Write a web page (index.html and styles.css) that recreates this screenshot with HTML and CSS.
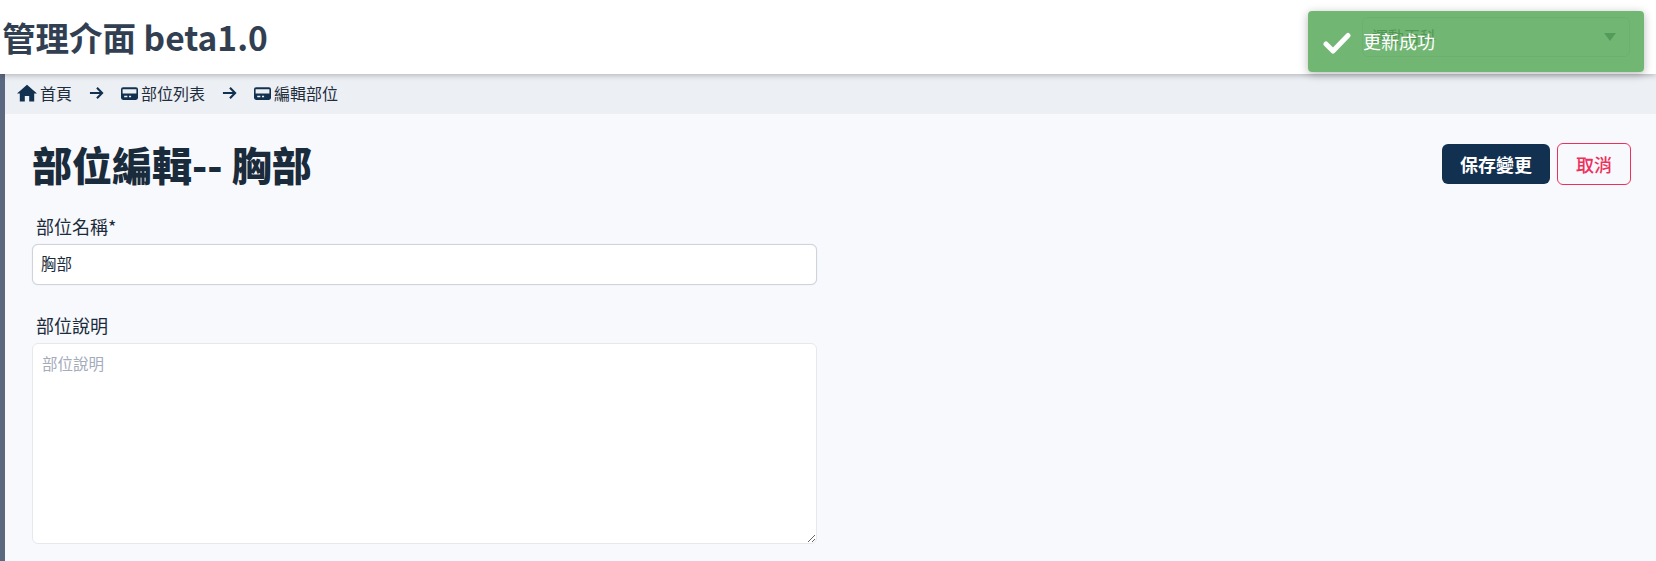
FILE: index.html
```html
<!DOCTYPE html>
<html lang="zh-Hant">
<head>
<meta charset="utf-8">
<title>部位編輯</title>
<link rel="stylesheet" href="styles.css">
</head>
<body>
<header class="topbar">
  <h1 class="brand">管理介面 beta1.0</h1>
  <div class="select">
    <span>運動百科</span>
    <svg class="caret" viewBox="0 0 14 10" width="14" height="10"><path d="M1 1h12L7 9z" fill="currentColor"/></svg>
  </div>
</header>
<div class="shell">
  <div class="rail"></div>
  <div class="content">
    <nav class="crumbs">
      <span class="crumb">
        <svg class="ico-home" viewBox="0 0 20 18" width="20" height="18"><path d="M10 .8 0 9.6h2.8V17.5h5V12h4.400v5.500h5V9.600H20z" fill="currentColor"/></svg>首頁
      </span>
      <svg class="arrow" viewBox="0 0 16 14" width="15" height="14"><path d="M1 7h13M8.500 1.500 14 7l-5.500 5.500" fill="none" stroke="currentColor" stroke-width="2.200"/></svg>
      <span class="crumb">
        <svg class="ico-card" viewBox="0 0 16 12" width="17" height="13"><path fill-rule="evenodd" d="M2 0h12a2 2 0 0 1 2 2v8a2 2 0 0 1-2 2H2a2 2 0 0 1-2-2V2a2 2 0 0 1 2-2Zm-.5 2v4h13V2ZM3 8v1.500h3V8Zm4.500 0v1.500h2V8Z" fill="currentColor"/></svg>部位列表
      </span>
      <svg class="arrow" viewBox="0 0 16 14" width="15" height="14"><path d="M1 7h13M8.500 1.500 14 7l-5.500 5.500" fill="none" stroke="currentColor" stroke-width="2.200"/></svg>
      <span class="crumb">
        <svg class="ico-card" viewBox="0 0 16 12" width="17" height="13"><path fill-rule="evenodd" d="M2 0h12a2 2 0 0 1 2 2v8a2 2 0 0 1-2 2H2a2 2 0 0 1-2-2V2a2 2 0 0 1 2-2Zm-.5 2v4h13V2ZM3 8v1.500h3V8Zm4.500 0v1.500h2V8Z" fill="currentColor"/></svg>編輯部位
      </span>
    </nav>
    <main class="page">
      <div class="page-head">
        <h2 class="page-title">部位編輯-- 胸部</h2>
        <div class="actions">
          <button class="btn btn-save" type="button">保存變更</button>
          <button class="btn btn-cancel" type="button">取消</button>
        </div>
      </div>
      <form class="form">
        <label class="field-label" for="name">部位名稱*</label>
        <input class="input" id="name" type="text" value="胸部">
        <label class="field-label label-gap" for="desc">部位說明</label>
        <textarea class="textarea" id="desc" placeholder="部位說明"></textarea>
      </form>
    </main>
  </div>
</div>
<div class="toast">
  <svg class="toast-check" viewBox="0 0 28 22" width="28" height="22"><path d="M3 12 10 19 25 3.500" fill="none" stroke="currentColor" stroke-width="5" stroke-linecap="round" stroke-linejoin="round"/></svg>
  <span class="toast-text">更新成功</span>
</div>
</body>
</html>
```
FILE: styles.css
```css
* { box-sizing: border-box; }
html, body { margin: 0; height: 100%; overflow: hidden; }
body {
  background: #f8f9fc;
  color: #1a2b3c;
  font-family: "Noto Sans CJK TC", "Noto Sans", sans-serif;
  font-size: 16px;
}
.topbar {
  position: relative;
  z-index: 2;
  height: 74px;
  padding: 0 26px 0 2px;
  display: flex;
  align-items: center;
  justify-content: space-between;
  background: #fff;
  box-shadow: 0 1px 6px rgba(0, 0, 0, .28);
}
.brand {
  margin: 0;
  font-size: 33.5px;
  line-height: 1;
  font-weight: 700;
  color: #323f52;
}
.select {
  width: 268px;
  height: 40px;
  padding: 0 12px 3px 9px;
  display: flex;
  align-items: center;
  justify-content: space-between;
  border: 1px solid #cfd5dd;
  border-radius: 6px;
  color: #1f2d3d;
  font-size: 16px;
}
.caret { color: #3a4657; margin-top: 3px; }
.shell { display: flex; height: 487px; }
.rail { width: 5px; background: #5a6880; flex: none; }
.content { flex: 1; min-width: 0; }
.crumbs {
  height: 40px;
  padding: 0 0 2px 12px;
  display: flex;
  align-items: center;
  background: #ecf0f5;
  color: #12304f;
  font-size: 16px;
}
.crumb { display: flex; align-items: center; gap: 3px; color: #1f2d3d; }
.ico-home, .ico-card { color: #12304f; flex: none; }
.arrow { margin: 0 17px; color: #12304f; flex: none; }
.page { padding: 0 25px 0 27px; }
.page-head {
  height: 101px;
  display: flex;
  align-items: center;
  justify-content: space-between;
  padding-bottom: 1px;
}
.page-title {
  margin: 0;
  font-size: 40px;
  line-height: 1.2;
  font-weight: 900;
  color: #1a2b3b;
}
.actions { display: flex; align-items: center; gap: 7px; }
.btn {
  font-family: inherit;
  font-size: 18px;
  font-weight: 700;
  border-radius: 6px;
  padding: 0;
}
.btn-save { width: 108px; height: 40px; background: #12304f; color: #fff; border: 0; }
.btn-cancel { width: 74px; height: 42px; background: transparent; color: #ef2f5b; border: 1px solid #ef2f5b; font-weight: 500; }
.form { width: 785px; display: flex; flex-direction: column; }
.field-label {
  padding-left: 4px;
  height: 29px;
  line-height: 22px;
  font-size: 18px;
  color: #1a2b3b;
}
.label-gap { margin-top: 27px; height: 31px; line-height: 26px; }
.input, .textarea {
  width: 100%;
  background: #fff;
  border-radius: 6px;
  font-family: inherit;
  font-size: 15.5px;
  color: #1a2b3b;
  outline: 0;
}
.input {
  height: 41px;
  padding: 0 8px 3px;
  border: 1px solid #cfd3de;
  box-shadow: 0 0 1px #cfd3de;
}
.textarea {
  height: 201px;
  padding: 7px 9px;
  border: 1px solid #e6e8ee;
  resize: vertical;
  line-height: 24px;
}
.textarea::placeholder { color: #a4abbb; opacity: 1; }
.toast {
  position: absolute;
  top: 11px;
  left: 1308px;
  width: 336px;
  height: 61px;
  padding: 0 15px;
  display: flex;
  align-items: center;
  gap: 12px;
  z-index: 5;
  background: rgba(89, 169, 90, .85);
  border-radius: 4px;
  color: #fff;
  font-size: 18px;
  box-shadow: 0 2px 10px rgba(0, 0, 0, .28);
}
.toast-check { flex: none; margin-top: 2px; }
.toast-text { margin-top: -2px; }
```
